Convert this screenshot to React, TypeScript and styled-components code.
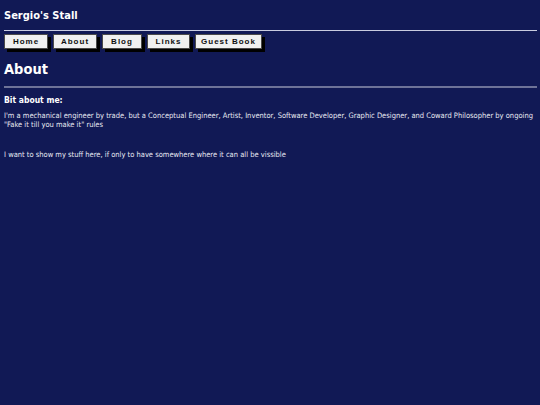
import styled, { createGlobalStyle } from 'styled-components';

const GlobalStyle = createGlobalStyle`
  html, body {
    margin: 0;
    padding: 0;
    background: #111955;
  }
  body {
    font-family: "DejaVu Sans Condensed", "DejaVu Sans", Verdana, sans-serif;
    font-stretch: condensed;
    color: #ffffff;
  }
`;

const Page = styled.div`
  padding: 0 3px 0 4px;
  min-height: 405px;
  box-sizing: border-box;
`;
const SiteTitle = styled.h1`
  margin: 0;
  padding-top: 9px;
  font-size: 11px;
  font-weight: bold;
  line-height: 14px;
`;
const Rule = styled.hr<{ $thick?: boolean }>`
  margin: 0;
  border: none;
  height: ${(p) => (p.$thick ? '2px' : '1px')};
  background: ${(p) => (p.$thick ? '#6e7398' : '#c9cce0')};
`;
const Nav = styled.nav`
  display: flex;
  gap: 5px;
  margin-top: 3px;
`;
const NavButton = styled.a<{ $w: number }>`
  display: flex;
  align-items: center;
  justify-content: center;
  box-sizing: border-box;
  width: ${(p) => p.$w}px;
  height: 15px;
  background: #f0f0f0;
  border: 1px solid #4a4a4a;
  box-shadow: 3px 3px 0 #000;
  color: #111;
  font-family: "Liberation Sans", Arial, sans-serif;
  font-stretch: normal;
  font-size: 8px;
  font-weight: bold;
  letter-spacing: 1px;
  text-decoration: none;
  cursor: pointer;
`;
const Heading = styled.h2`
  margin: 12px 0 8px;
  font-size: 14.5px;
  font-weight: bold;
  line-height: 17px;
`;
const SubHeading = styled.h3`
  margin: 7px 0 5px;
  font-size: 8.5px;
  font-weight: bold;
  line-height: 11px;
`;
const Para = styled.p<{ $gap?: number }>`
  margin: 0 0 ${(p) => p.$gap ?? 0}px;
  font-size: 7.5px;
  line-height: 9px;
  color: #e8e9f2;
`;

const links = [
  { label: 'Home', w: 44 },
  { label: 'About', w: 44 },
  { label: 'Blog', w: 40 },
  { label: 'Links', w: 43 },
  { label: 'Guest Book', w: 67 },
];

export default function App() {
  return (
    <>
      <GlobalStyle />
      <Page>
        <SiteTitle>Sergio's Stall</SiteTitle>
        <Rule style={{ marginTop: 7 }} />
        <Nav>
          {links.map((l) => (
            <NavButton key={l.label} $w={l.w}>
              {l.label}
            </NavButton>
          ))}
        </Nav>
        <Heading>About</Heading>
        <Rule $thick />
        <SubHeading>Bit about me:</SubHeading>
        <Para $gap={21}>
          I'm a mechanical engineer by trade, but a Conceptual Engineer, Artist, Inventor, Software Developer, Graphic Designer, and Coward Philosopher by ongoing "Fake it till you make it" rules
        </Para>
        <Para>I want to show my stuff here, if only to have somewhere where it can all be vissible</Para>
      </Page>
    </>
  );
}
